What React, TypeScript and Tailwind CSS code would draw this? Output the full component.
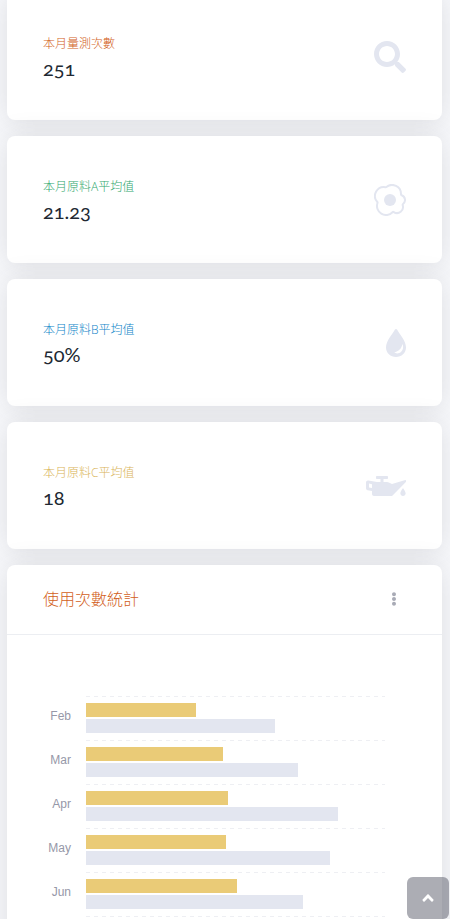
import type { ReactNode } from 'react';
import { BsEggFried } from 'react-icons/bs';
import { FaAngleUp, FaEllipsisV, FaOilCan, FaSearch } from 'react-icons/fa';

interface StatCardProps {
    label: string;
    value: string;
    labelColor: string;
    icon: ReactNode;
}

interface UsageRow {
    month: string;
    current: number;
    previous: number;
}

const AXIS_MAX = 300;

const usage: UsageRow[] = [
    { month: 'Feb', current: 110, previous: 190 },
    { month: 'Mar', current: 137, previous: 213 },
    { month: 'Apr', current: 142, previous: 253 },
    { month: 'May', current: 140, previous: 245 },
    { month: 'Jun', current: 152, previous: 218 },
];

const DropIcon = () => (
    <svg width="20" height="28" viewBox="0 0 20 28" fill="currentColor" aria-hidden="true">
        <path
            fillRule="evenodd"
            d="M10 0c.5 0 .9 .3 1.200 .8C13.500 5 20 12 20 18.500 20 24 15.500 28 10 28S0 24 0 18.500C0 12 6.500 5 8.800 .8 9.100 .3 9.500 0 10 0ZM16.400 15C15.800 19.500 12.500 22.500 8.200 23.300c1.200 1.200 3.300 1.400 5 .7 3.500-1.300 4.900-5.500 3.200-9Z"
        />
    </svg>
);

const GridLine = () => (
    <div className="h-px bg-[repeating-linear-gradient(90deg,#eeeff3_0_4px,transparent_4px_8px)]" />
);

const StatCard = ({ label, value, labelColor, icon }: StatCardProps) => {
    return (
        <div className="flex h-[127px] items-center justify-between rounded-lg bg-white px-9 shadow-[0_2px_28px_rgba(58,59,69,0.15)]">
            <div className="pt-1">
                <div className={`mb-0.5 text-xs leading-4 font-light ${labelColor}`}>{label}</div>
                <div className="font-['Lato'] text-xl leading-7 text-[#212832] oldstyle-nums">{value}</div>
            </div>
            <div className="text-[#e3e6f0]">{icon}</div>
        </div>
    );
};

const UsageChart = () => {
    return (
        <div className="pt-[61px] pr-[57px] pb-9 pl-9">
            {usage.map((row) => (
                <div key={row.month} className="flex h-11">
                    <div className="w-7 shrink-0 pt-3 text-right font-['Liberation_Sans'] text-xs leading-4 text-[#9698a8]">
                        {row.month}
                    </div>
                    <div className="ml-[15px] flex-1">
                        <GridLine />
                        <div
                            className="mt-1.5 h-3.5 bg-[#eacb77]"
                            style={{ width: `${(row.current / AXIS_MAX) * 100}%` }}
                        />
                        <div
                            className="mt-0.5 h-3.5 bg-[#e3e6f0]"
                            style={{ width: `${(row.previous / AXIS_MAX) * 100}%` }}
                        />
                    </div>
                </div>
            ))}
            <div className="ml-[43px]">
                <GridLine />
            </div>
        </div>
    );
};

const App = () => {
    return (
        <div className="h-screen overflow-hidden bg-[#f8f9fc] font-['Open_Sans','Noto_Sans_CJK_TC',sans-serif]">
            <main className="-mt-[7px] flex flex-col gap-4 pr-2 pl-[7px]">
                <StatCard
                    label="本月量測次數"
                    value="251"
                    labelColor="text-[#d2601a]"
                    icon={<FaSearch size={32} />}
                />
                <StatCard
                    label="本月原料A平均值"
                    value="21.23"
                    labelColor="text-[#2fa76c]"
                    icon={<BsEggFried size={32} />}
                />
                <StatCard
                    label="本月原料B平均值"
                    value="50%"
                    labelColor="text-[#0d84c8]"
                    icon={<DropIcon />}
                />
                <StatCard
                    label="本月原料C平均值"
                    value="18"
                    labelColor="text-[#d9b458]"
                    icon={<FaOilCan className="h-8 w-10" />}
                />
                <section className="rounded-lg bg-white shadow-[0_2px_28px_rgba(58,59,69,0.15)]">
                    <header className="flex h-[70px] items-center justify-between border-b border-[#eceef2] pr-10 pb-0.5 pl-9">
                        <h2 className="text-base font-light text-[#d2601a]">使用次數統計</h2>
                        <button type="button" aria-label="選單" className="flex w-4 justify-center text-[#a9abb6]">
                            <FaEllipsisV size={14} />
                        </button>
                    </header>
                    <UsageChart />
                </section>
            </main>
            <a
                href="#root"
                aria-label="回到頂端"
                className="fixed right-px bottom-0 flex size-[42px] items-center justify-center rounded-md bg-[#5a5c69]/50 text-white"
            >
                <FaAngleUp size={18} />
            </a>
        </div>
    );
};

export default App;
